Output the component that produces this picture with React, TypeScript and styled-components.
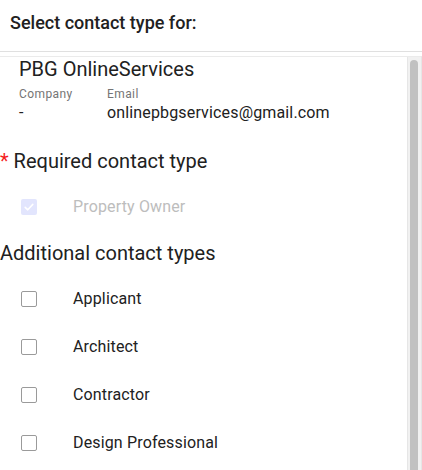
import styled, { createGlobalStyle } from 'styled-components'

const GlobalStyle = createGlobalStyle`
	html, body {
		margin: 0;
		padding: 0;
		overflow: hidden;
		background: #fff;
	}
	body {
		font-family: Roboto, 'Liberation Sans', sans-serif;
		color: #212121;
	}
`

const additionalTypes = ['Applicant', 'Architect', 'Contractor', 'Design Professional']

export default function App(): JSX.Element {
	return (
		<>
			<GlobalStyle />
			<Header>Select contact type for:</Header>
			<ScrollArea>
				<Content>
					<Contact>
						<Name>PBG OnlineServices</Name>
						<Details>
							<Label>Company</Label>
							<Label>Email</Label>
							<Value>-</Value>
							<Value>onlinepbgservices@gmail.com</Value>
						</Details>
					</Contact>

					<SectionTitle top={26}>
						<Asterisk>*</Asterisk> Required contact type
					</SectionTitle>
					<List>
						<Row>
							<Box checked>
								<CheckMark />
							</Box>
							<RowLabel disabled>Property Owner</RowLabel>
						</Row>
					</List>

					<SectionTitle top={10}>Additional contact types</SectionTitle>
					<List>
						{additionalTypes.map((type) => (
							<Row key={type}>
								<Box />
								<RowLabel>{type}</RowLabel>
							</Row>
						))}
					</List>
				</Content>
				<Track>
					<Thumb />
				</Track>
			</ScrollArea>
		</>
	)
}

// white tick for the checked box
function CheckMark(): JSX.Element {
	return (
		<svg width="12" height="12" viewBox="0 0 12 12" fill="none">
			<path
				d="M2.2 6.3 L4.8 8.8 L9.8 3.4"
				stroke="#fff"
				strokeWidth="1.6"
				strokeLinecap="round"
				strokeLinejoin="round"
			/>
		</svg>
	)
}

const Header = styled.header`
	box-sizing: border-box;
	height: 52px;
	padding: 13px 10px 0;
	border-bottom: 1px solid #e0e0e0;
	font-size: 18px;
	line-height: 20px;
	font-weight: 500;
	color: #212121;
`
const ScrollArea = styled.main`
	box-sizing: border-box;
	display: flex;
	margin-top: 4px;
	height: 414px;
	border-top: 1px solid #ebebeb;
	border-right: 1px solid #e6e6e6;
	overflow: hidden;
`
const Content = styled.div`
	flex: 1;
	min-width: 0;
`
const Track = styled.div`
	box-sizing: border-box;
	display: flex;
	flex-direction: column;
	width: 14px;
	padding: 3px 3px 0 2px;
	background: #f1f1f1;
	border-left: 1px solid #e6e6e6;
`
const Thumb = styled.div`
	flex: 1;
	background: #c1c1c1;
	border-radius: 4px 4px 0 0;
`
const Contact = styled.section`
	padding-left: 19px;
`
const Name = styled.h2`
	margin: 0;
	font-size: 20px;
	line-height: 24px;
	font-weight: 400;
`
const Details = styled.div`
	display: grid;
	grid-template-columns: 88px auto;
	margin-top: 5px;
`
const Label = styled.span`
	font-size: 12px;
	line-height: 16px;
	letter-spacing: 0.4px;
	color: #757575;
	margin-bottom: 1px;
`
const Value = styled.span`
	font-size: 16px;
	line-height: 20px;
	letter-spacing: 0.15px;
	color: #212121;
`
const SectionTitle = styled.h3<{ top: number }>`
	margin: ${({ top }) => top}px 0 0;
	font-size: 20px;
	line-height: 24px;
	font-weight: 400;
	color: #212121;
`
const Asterisk = styled.span`
	color: #f41d1d;
`
const List = styled.ul`
	list-style: none;
	margin: 0;
	padding: 10px 0 0;
`
const Row = styled.li`
	display: flex;
	align-items: center;
	height: 48px;
	padding-left: 21px;
`
const Box = styled.span<{ checked?: boolean }>`
	box-sizing: border-box;
	display: flex;
	align-items: center;
	justify-content: center;
	width: 16px;
	height: 16px;
	border-radius: 2px;
	background: ${({ checked }) => (checked ? '#e2e5fd' : '#fff')};
	border: ${({ checked }) => (checked ? 'none' : '1.5px solid #9a9a9a')};
	margin-right: 36px;
	flex-shrink: 0;
`
const RowLabel = styled.span<{ disabled?: boolean }>`
	font-size: 16px;
	line-height: 20px;
	letter-spacing: 0.15px;
	color: ${({ disabled }) => (disabled ? '#bdbdbd' : '#212121')};
`
